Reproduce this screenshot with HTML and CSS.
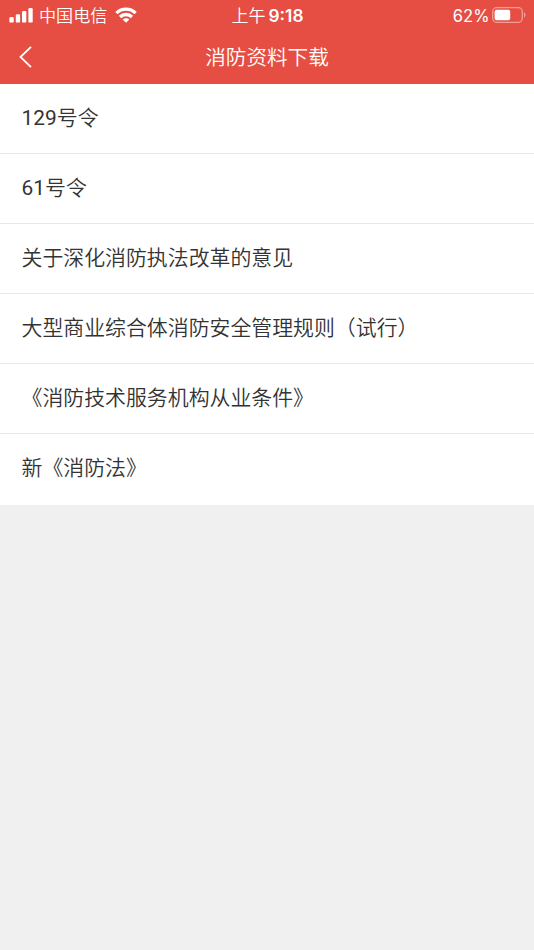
FILE: index.html
```html
<!DOCTYPE html>
<html lang="zh-CN">
<head>
<meta charset="utf-8">
<title>消防资料下载</title>
<link rel="stylesheet" href="styles.css">
</head>
<body>
<header class="header">
  <div class="status">
    <div class="status-left">
      <svg class="signal" width="24" height="15" viewBox="0 0 24 15" fill="#fff"><rect x=".4" y="9" width="4.3" height="5.6" rx="1.2"/><rect x="6.8" y="6.3" width="4.3" height="8.3" rx="1.2"/><rect x="13" y="3" width="4.3" height="11.6" rx="1.2"/><rect x="19.4" y="0" width="4.3" height="14.6" rx="1.2"/></svg>
      <span class="carrier">中国电信</span>
      <svg class="wifi" width="22" height="16" viewBox="0 0 22 16" fill="none" stroke="#fff" stroke-width="3.3"><path d="M1.4 6.1a13.6 13.6 0 0 1 19.2 0"/><path d="M5 10a8.5 8.5 0 0 1 12 0"/><path d="M11 15.8l-3.3-3.3a4.7 4.7 0 0 1 6.6 0z" fill="#fff" stroke="none"/></svg>
    </div>
    <div class="time">上午<b>9:18</b></div>
    <div class="status-right"><span class="percent">62%</span>
      <svg class="battery" width="34" height="16" viewBox="0 0 34 16"><rect x=".7" y=".7" width="29.6" height="14.6" rx="4" fill="none" stroke="#fff" stroke-opacity=".45" stroke-width="1.3"/><rect x="2.6" y="2.8" width="15.6" height="10.4" rx="2" fill="#fff"/><path d="M32 5.3q3 2.7 0 5.4z" fill="#fff" fill-opacity=".5"/></svg>
    </div>
  </div>
  <div class="nav">
    <svg class="back" width="14" height="22" viewBox="0 0 14 22" fill="none" stroke="#fff" stroke-width="1.8"><path d="M12 .8L1.5 11 12 21.2"/></svg>
    <h1 class="title">消防资料下载</h1>
  </div>
</header>
<ul class="list">
  <li class="item"><span class="number">129</span>号令</li>
  <li class="item"><span class="number">61</span>号令</li>
  <li class="item">关于深化消防执法改革的意见</li>
  <li class="item">大型商业综合体消防安全管理规则（试行）</li>
  <li class="item">《消防技术服务机构从业条件》</li>
  <li class="item">新《消防法》</li>
</ul>
</body>
</html>
```
FILE: styles.css
```css
* { box-sizing: border-box; }
body {
  margin: 0;
  min-height: 950px;
  background: #f0f0f0;
  font-family: Roboto, "Noto Sans CJK SC DemiLight", "Noto Sans CJK SC", sans-serif;
  font-weight: 350;
  color: #333;
}
.header { height: 83.5px; background: #e64e43; color: #fff; }
.status {
  height: 30px;
  display: grid;
  grid-template-columns: 1fr auto 1fr;
  align-items: center;
  padding: 0 8px 0 9px;
  font-family: Inter, "Noto Sans CJK SC DemiLight", "Noto Sans CJK SC", sans-serif;
  font-size: 17px;
  line-height: 30px;
}
.status-left, .status-right { display: flex; align-items: center; }
.signal, .wifi, .battery { margin-top: -1px; }
.status-right { justify-content: flex-end; }
.carrier { margin: 0 7.5px 0 6px; padding-top: 1px; font-size: 17.1px; }
.time { font-weight: 400; padding-top: 1px; }
.time b { margin-left: 3px; font-weight: 600; font-size: 17.3px; }
.percent { margin-right: 2.5px; font-size: 16.6px; font-weight: 400; }
.nav {
  height: 53px;
  display: grid;
  grid-template-columns: 34px 1fr 34px;
  align-items: center;
}
.back { margin: 1px 0 0 19px; }
.title {
  margin: 0;
  padding-top: 3px;
  font-size: 20.6px;
  font-weight: 350;
  line-height: 50px;
  text-align: center;
}
.list { margin: 0; padding: 0; list-style: none; background: #fff; }
.item {
  height: 70.2px;
  padding-left: 21.5px;
  border-bottom: 1px solid #e8e8e8;
  font-size: 20.9px;
  line-height: 68px;
}
.item:last-child { border-bottom: 0; }
.number { font-weight: 400; }
```
